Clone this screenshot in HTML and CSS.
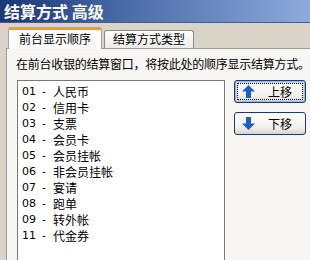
FILE: index.html
```html
<!DOCTYPE html>
<html>
<head>
<meta charset="utf-8">
<link rel="stylesheet" href="styles.css">
</head>
<body>
<div class="window">
  <div class="titlebar">结算方式 高级</div>
  <div class="body">
    <div class="tabs">
      <div class="tab active">前台显示顺序</div>
      <div class="tab">结算方式类型</div>
    </div>
    <div class="panel">
      <div class="hint">在前台收银的结算窗口，将按此处的顺序显示结算方式。</div>
      <div class="content">
        <ul class="list">
          <li><span class="no">01</span><span class="dash">-</span>人民币</li>
          <li><span class="no">02</span><span class="dash">-</span>信用卡</li>
          <li><span class="no">03</span><span class="dash">-</span>支票</li>
          <li><span class="no">04</span><span class="dash">-</span>会员卡</li>
          <li><span class="no">05</span><span class="dash">-</span>会员挂帐</li>
          <li><span class="no">06</span><span class="dash">-</span>非会员挂帐</li>
          <li><span class="no">07</span><span class="dash">-</span>宴请</li>
          <li><span class="no">08</span><span class="dash">-</span>跑单</li>
          <li><span class="no">09</span><span class="dash">-</span>转外帐</li>
          <li><span class="no">11</span><span class="dash">-</span>代金券</li>
        </ul>
        <div class="buttons">
          <button class="btn focus"><svg class="ico" width="13" height="13" viewBox="0 0 13 13"><path d="M6.5 0 L13 6.5 L9 6.5 L9 13 L4 13 L4 6.5 L0 6.5 Z" fill="#1a5fc8"/></svg><span>上移</span></button>
          <button class="btn"><svg class="ico" width="13" height="13" viewBox="0 0 13 13"><path d="M6.5 13 L13 6.5 L9 6.5 L9 0 L4 0 L4 6.5 L0 6.5 Z" fill="#1a5fc8"/></svg><span>下移</span></button>
        </div>
      </div>
    </div>
  </div>
</div>
</body>
</html>
```

FILE: styles.css
```css
html, body {
  margin: 0;
  padding: 0;
  width: 310px;
  height: 260px;
  overflow: hidden;
  font-family: "Noto Sans CJK SC", "DejaVu Sans", sans-serif;
}
.window {
  width: 310px;
  height: 260px;
  display: flex;
  flex-direction: column;
  background: #d8d4c8;
}
.titlebar {
  height: 23px;
  box-sizing: border-box;
  border-bottom: 1px solid #4a5c84;
  background: linear-gradient(to right, #1a3674 0%, #4a6aa8 40%, #8eaadc 100%);
  color: #fff;
  font-weight: bold;
  font-size: 16px;
  line-height: 22px;
  padding-left: 4px;
  white-space: nowrap;
}
.body {
  flex: 1;
  padding: 4px 0 0 6px;
  display: flex;
  flex-direction: column;
  min-height: 0;
}
.tabs {
  display: flex;
  align-items: flex-end;
  height: 21px;
  padding-left: 2px;
  position: relative;
  z-index: 1;
}
.tab {
  font-size: 12px;
  line-height: 16px;
  height: 17px;
  padding: 0 8px;
  border: 1px solid #8c8c84;
  border-bottom: none;
  border-radius: 3px 3px 0 0;
  background: linear-gradient(#fefefe, #ecebe6);
  color: #000;
  margin-right: 1px;
  white-space: nowrap;
}
.tab.active {
  box-sizing: border-box;
  height: 22px;
  line-height: 18px;
  padding: 0 10px;
  border-top: 3px solid #f0a020;
  border-left: 1px solid #a8a49c;
  border-right: 1px solid #a8a49c;
  background: #fcfcfe;
  margin-bottom: -1px;
  margin-right: 2px;
}
.panel {
  flex: 1;
  background: #f7f6f3;
  border-left: 1px solid #9c9a94;
  border-top: 1px solid #9c9a94;
  padding: 8px 0 0 9px;
  min-height: 0;
  display: flex;
  flex-direction: column;
}
.hint {
  font-size: 12px;
  line-height: 14px;
  white-space: nowrap;
  letter-spacing: -0.25px;
  color: #000;
  margin-bottom: 9px;
}
.content {
  display: flex;
  flex: 1;
  min-height: 0;
  padding-left: 1px;
}
.list {
  list-style: none;
  margin: 0;
  padding: 3px 0 0 4px;
  width: 202px;
  background: #fff;
  border: 1px solid #7a7a7a;
  border-bottom: none;
  font-size: 12px;
  line-height: 16px;
  color: #000;
}
.list li {
  white-space: nowrap;
  height: 16px;
  display: flex;
}
.list .no {
  width: 13px;
  font-family: "DejaVu Sans", sans-serif;
  font-size: 11px;
}
.list .dash {
  width: 18px;
  text-align: center;
  font-family: "DejaVu Sans", sans-serif;
  font-size: 11px;
}
.buttons {
  margin-left: 9px;
  display: flex;
  flex-direction: column;
  gap: 9px;
}
.btn {
  width: 72px;
  height: 23px;
  border: 1px solid #1c3c6c;
  border-radius: 3px;
  background: linear-gradient(#ffffff, #f2f0ea 70%, #d8d4c8);
  display: flex;
  align-items: center;
  padding: 0 0 0 7px;
  font-family: "Noto Sans CJK SC", sans-serif;
  font-size: 12px;
  color: #000;
  box-sizing: border-box;
}
.btn.focus {
  box-shadow: inset 0 0 0 1px #9cb6e8, inset 0 0 0 2px #c4d4f4;
  outline: 1px dotted #000;
  outline-offset: -4px;
}
.btn .ico {
  flex: none;
}
.btn span {
  margin-left: 13px;
}
```
